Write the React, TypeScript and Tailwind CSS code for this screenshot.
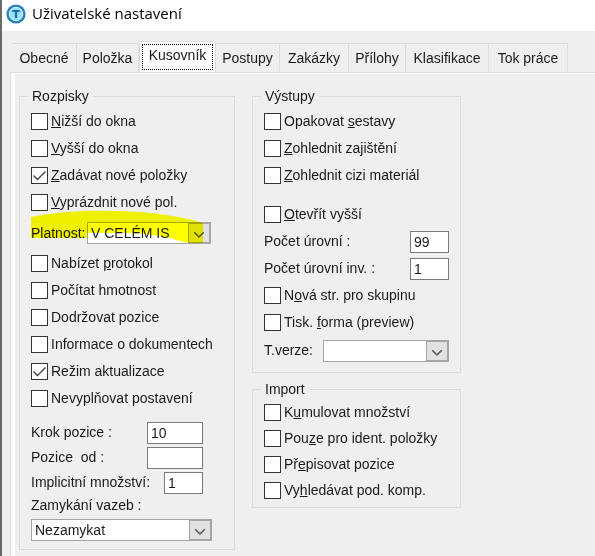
import { useId, useState } from "react";
import type { ReactNode } from "react";

const TABS = [
  { name: "Obecné", width: "w-[65px]" },
  { name: "Položka", width: "w-[62px]" },
  { name: "Kusovník", width: "w-[77px]" },
  { name: "Postupy", width: "w-[64px]" },
  { name: "Zakázky", width: "w-[69px]" },
  { name: "Přílohy", width: "w-[57px]" },
  { name: "Klasifikace", width: "w-[83px]" },
  { name: "Tok práce", width: "w-[79px]" },
];

function AppIcon() {
  return (
    <svg viewBox="0 0 20 20" className="size-5 shrink-0" aria-hidden="true">
      <circle cx="10" cy="10" r="9.6" fill="#1f7fbb" />
      <circle cx="10" cy="10" r="6.8" fill="#9be0fa" stroke="#e3f6fd" strokeWidth="1" />
      <path d="M6.2 7h7.600M10 7v7" stroke="#1a6fa8" strokeWidth="2.2" fill="none" />
    </svg>
  );
}

function Check({
  children,
  checked = false,
  row = "h-[27px]",
}: {
  children: ReactNode;
  checked?: boolean;
  row?: string;
}) {
  return (
    <label className={`flex items-center gap-[3px] whitespace-nowrap ${row}`}>
      <span className="grid shrink-0">
        <input
          type="checkbox"
          defaultChecked={checked}
          className="peer col-start-1 row-start-1 size-[17px] appearance-none border border-[#333] bg-white"
        />
        <svg
          viewBox="0 0 17 17"
          className="pointer-events-none invisible col-start-1 row-start-1 size-[17px] peer-checked:visible"
          aria-hidden="true"
        >
          <path d="M2.500 8.500l4 4L14.500 4.500" stroke="#444" strokeWidth="1.400" fill="none" />
        </svg>
      </span>
      <span>{children}</span>
    </label>
  );
}

function Group({
  title,
  children,
  padding = "pt-0.5",
}: {
  title: string;
  children: ReactNode;
  padding?: string;
}) {
  return (
    <fieldset className="min-w-0 border border-[#dcdcdc]">
      <legend className="ml-2 px-1 leading-5">{title}</legend>
      <div className={`px-[11px] ${padding}`}>{children}</div>
    </fieldset>
  );
}

function Select({ id, value, className }: { id: string; value: string; className: string }) {
  return (
    <span className={`grid h-[22px] border border-[#a5a5a5] bg-white ${className}`}>
      <select id={id} className="col-start-1 row-start-1 w-full appearance-none pr-6 pl-[3px] leading-5">
        <option>{value}</option>
      </select>
      <span className="pointer-events-none col-start-1 row-start-1 grid w-[22px] place-items-center justify-self-end border border-[#a5a5a5] bg-[#e1e1e1]">
        <svg viewBox="0 0 12 8" className="mt-1 h-2 w-3" aria-hidden="true">
          <path d="M1.2 1.2L6 6l4.8-4.8" stroke="#555" strokeWidth="1.5" fill="none" />
        </svg>
      </span>
    </span>
  );
}

function Field({
  label,
  value,
  row = "h-[27px]",
  width = "w-[39px]",
}: {
  label: string;
  value: string;
  row?: string;
  width?: string;
}) {
  const id = useId();
  return (
    <div className={`flex items-center justify-between ${row}`}>
      <label htmlFor={id} className="whitespace-pre">
        {label}
      </label>
      <input
        id={id}
        defaultValue={value}
        className={`h-[22px] border border-[#7a7a7a] bg-white px-[3px] ${width}`}
      />
    </div>
  );
}

export default function App() {
  const [active, setActive] = useState("Kusovník");

  return (
    <div className="flex min-h-screen flex-col border-l-2 border-[#6b6b6b] bg-[#efefef] font-['Liberation_Sans',Arial,sans-serif] text-[14px] text-[#1a1a1a]">
      <header className="flex h-[31px] items-center gap-1.5 bg-white pb-1 pl-1 font-['Open_Sans','Noto_Sans',sans-serif] text-[15px] text-black">
        <AppIcon />
        <h1>Uživatelské nastavení</h1>
      </header>

      <div role="tablist" className="mt-2.5 ml-2.5 flex h-[31px] items-end">
        {TABS.map((tab) => (
          <button
            key={tab.name}
            role="tab"
            aria-selected={tab.name === active}
            onClick={() => setActive(tab.name)}
            className={
              tab.name === active
                ? `h-full shrink-0 border border-b-0 border-[#dcdcdc] bg-white p-0.5 ${tab.width}`
                : `h-[29px] shrink-0 border-t border-r border-[#dcdcdc] ${tab.width}`
            }
          >
            {tab.name === active ? (
              <span className="block h-full border border-dotted border-black leading-5">{tab.name}</span>
            ) : (
              tab.name
            )}
          </button>
        ))}
      </div>

      <main className="ml-2 flex grow items-start gap-[17px] border-t border-l border-[#dcdcdc] pt-[13px] pl-2 shadow-[inset_4px_1px_0_#fff]">
        <div className="w-[216px] shrink-0">
          <Group title="Rozpisky">
            <Check>
              <u>N</u>ižší do okna
            </Check>
            <Check>
              <u>V</u>yšší do okna
            </Check>
            <Check checked>
              <u>Z</u>adávat nové položky
            </Check>
            <Check>
              <u>V</u>yprázdnit nové pol.
            </Check>
            <div className="relative flex h-[34px] items-center">
              <label htmlFor="platnost" className="w-14">
                Platnost:
              </label>
              <Select id="platnost" value="V CELÉM IS" className="w-[124px]" />
              {/* marker stroke over the row */}
              <svg
                viewBox="0 0 172 34"
                className="pointer-events-none absolute -top-1.5 left-0 h-[34px] w-[172px] mix-blend-multiply"
                aria-hidden="true"
              >
                <path
                  d="M0 7C20 3 50 0 80 1c35 0 70 5 92 12v20h-12c-10-1-18-5-32-7-12-2-18-3-30-3H56v5H0z"
                  fill="#ffff00"
                />
              </svg>
            </div>
            <Check>
              Nabízet <u>p</u>rotokol
            </Check>
            <Check>Počítat hmotnost</Check>
            <Check>Dodržovat pozice</Check>
            <Check>Informace o dokumentech</Check>
            <Check checked>Režim aktualizace</Check>
            <Check>Nevyplňovat postavení</Check>
            <div className="pt-2 pr-5">
              <Field label="Krok pozice :" value="10" row="h-[25px]" width="w-14" />
              <Field label="Pozice  od :" value="" row="h-[25px]" width="w-14" />
              <Field label="Implicitní množství:" value="1" row="h-[25px]" />
            </div>
            <label htmlFor="zamykani" className="block leading-5">
              Zamykání vazeb :
            </label>
            <div className="pt-1 pb-2">
              <Select id="zamykani" value="Nezamykat" className="w-[181px]" />
            </div>
          </Group>
        </div>

        <div className="flex w-[209px] shrink-0 flex-col gap-1.5">
          <Group title="Výstupy">
            <Check>
              Opakovat <u>s</u>estavy
            </Check>
            <Check>
              <u>Z</u>ohlednit zajištění
            </Check>
            <Check>
              <u>Z</u>ohlednit cizi materiál
            </Check>
            <div className="pt-3">
              <Check>
                <u>O</u>tevřít vyšší
              </Check>
            </div>
            <Field label="Počet úrovní :" value="99" />
            <Field label="Počet úrovní inv. :" value="1" />
            <Check>
              N<u>o</u>vá str. pro skupinu
            </Check>
            <Check>
              Tisk. <u>f</u>orma (preview)
            </Check>
            <div className="flex h-[36px] items-start justify-between pt-1">
              <label htmlFor="tverze" className="leading-5">
                T.verze:
              </label>
              <Select id="tverze" value="" className="w-[126px]" />
            </div>
          </Group>
          <Group title="Import" padding="pb-1">
            <Check row="h-[26px]">
              K<u>u</u>mulovat množství
            </Check>
            <Check row="h-[26px]">
              Pou<u>z</u>e pro ident. položky
            </Check>
            <Check row="h-[26px]">
              Př<u>e</u>pisovat pozice
            </Check>
            <Check row="h-[26px]">
              Vy<u>h</u>ledávat pod. komp.
            </Check>
          </Group>
        </div>
      </main>
    </div>
  );
}
